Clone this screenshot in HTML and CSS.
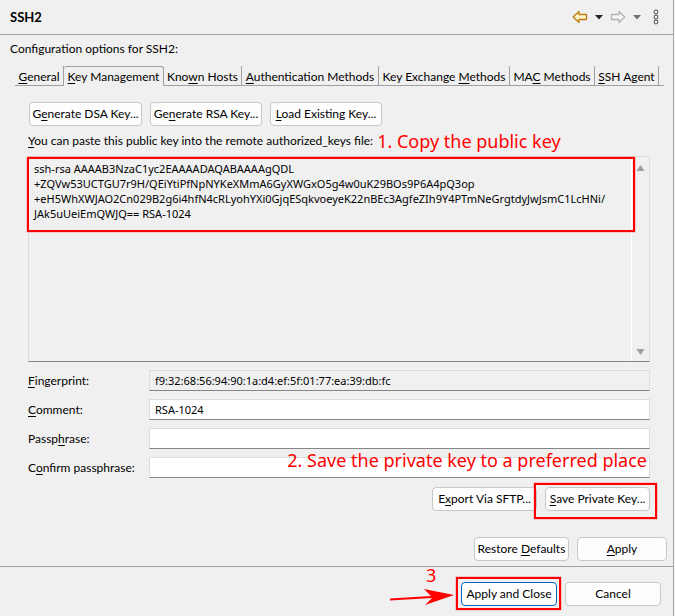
FILE: index.html
```html
<!DOCTYPE html>
<html lang="en">
<head>
<meta charset="utf-8">
<title>SSH2</title>
<link rel="stylesheet" href="styles.css">
</head>
<body>
<main class="window">
  <header class="header">
    <h1>SSH2</h1>
    <nav class="tools" aria-label="History">
      <button class="tool arrow" aria-label="Back"><svg width="16" height="14" viewBox="0 0 16 14"><path d="M1.2 7 7 1.5V4.500H14.500V9.500H7V12.500Z" fill="#fff3c8" stroke="#c07c14" stroke-width="1.300" stroke-linejoin="round"/></svg></button>
      <button class="tool drop" aria-label="Back history"><svg width="8" height="5" viewBox="0 0 8 5"><path d="M0 0H8L4 4.500Z" fill="#222"/></svg></button>
      <button class="tool arrow" aria-label="Forward"><svg width="16" height="14" viewBox="0 0 16 14"><path d="M14.800 7 9 1.500V4.500H1.500V9.500H9V12.500Z" fill="#f5f5f5" stroke="#b2b2b2" stroke-width="1.300" stroke-linejoin="round"/></svg></button>
      <button class="tool drop" aria-label="Forward history"><svg width="8" height="5" viewBox="0 0 8 5"><path d="M0 0H8L4 4.500Z" fill="#707070"/></svg></button>
      <button class="tool menu" aria-label="View menu"><svg width="6" height="16" viewBox="0 0 6 16" fill="#fff" stroke="#666" stroke-width="1.200"><circle cx="3" cy="3" r="1.800"/><circle cx="3" cy="8" r="1.800"/><circle cx="3" cy="13" r="1.800"/></svg></button>
    </nav>
  </header>

  <section class="page">
    <p class="intro">Configuration options for SSH2:</p>
    <div class="tabs" role="tablist">
      <button class="tab" role="tab"><span><u>G</u>eneral</span></button>
      <button class="tab active" role="tab" aria-selected="true"><span><u>K</u>ey Management</span></button>
      <button class="tab" role="tab"><span>Kno<u>w</u>n Hosts</span></button>
      <button class="tab" role="tab"><span><u>A</u>uthentication Methods</span></button>
      <button class="tab" role="tab"><span>Key Exchange <u>M</u>ethods</span></button>
      <button class="tab" role="tab"><span>MA<u>C</u> Methods</span></button>
      <button class="tab" role="tab"><span><u>S</u>SH Agent</span></button>
      <span class="tab-end"></span>
    </div>

    <div class="panel" role="tabpanel">
      <div class="row keys">
        <button class="btn key">G<u>e</u>nerate DSA Key...</button>
        <button class="btn key">Ge<u>n</u>erate RSA Key...</button>
        <button class="btn key"><u>L</u>oad Existing Key...</button>
      </div>
      <div class="caption">
        <label for="pubkey"><u>Y</u>ou can paste this public key into the remote authorized_keys file:</label>
        <span class="note">1. Copy the public key</span>
      </div>
      <div class="keybox">
        <textarea id="pubkey" readonly spellcheck="false">ssh-rsa AAAAB3NzaC1yc2EAAAADAQABAAAAgQDL
+ZQVw53UCTGU7r9H/QEiYtiPfNpNYKeXMmA6GyXWGxO5g4w0uK29BOs9P6A4pQ3op
+eH5WhXWJAO2Cn029B2g6i4hfN4cRLyohYXi0GjqESqkvoeyeK22nBEc3AgfeZIh9Y4PTmNeGrgtdyJwJsmC1LcHNi/
JAk5uUeiEmQWJQ== RSA-1024</textarea>
        <div class="scroll">
          <svg width="9" height="6" viewBox="0 0 9 6"><path d="M.5 6 4 .5H5L8.500 6Z" fill="#a0a0a0"/></svg>
          <svg width="9" height="6" viewBox="0 0 9 6"><path d="M.5 0 4 5.500H5L8.500 0Z" fill="#a0a0a0"/></svg>
        </div>
        <span class="mark mark-key"></span>
      </div>
      <div class="fields">
        <label for="fp"><u>F</u>ingerprint:</label>
        <input id="fp" type="text" readonly value="f9:32:68:56:94:90:1a:d4:ef:5f:01:77:ea:39:db:fc">
        <label for="cm"><u>C</u>omment:</label>
        <input id="cm" type="text" value="RSA-1024">
        <label for="pp">Passp<u>h</u>rase:</label>
        <input id="pp" type="password">
        <label for="cp">C<u>o</u>nfirm passphrase:</label>
        <input id="cp" type="password">
        <span class="note note-save">2. Save the private key to a preferred place</span>
      </div>
      <div class="row end">
        <button class="btn export">E<u>x</u>port Via SFTP...</button>
        <span class="marked"><button class="btn save"><u>S</u>ave Private Key...</button><span class="mark mark-save"></span></span>
      </div>
    </div>
    <div class="row defaults">
      <button class="btn restore">Restore <u>D</u>efaults</button>
      <button class="btn apply"><u>A</u>pply</button>
    </div>
  </section>

  <footer class="footer">
    <span class="marked">
      <button class="btn primary">Apply and Close</button>
      <span class="mark mark-close"></span>
      <span class="note note-three">3</span>
      <svg class="pointer" width="66" height="18" viewBox="0 0 66 18"><path d="M1 10.500 42 8 35 1 65 7 36 17 43 10 1 12.500Z" fill="#f00"/></svg>
    </span>
    <button class="btn cancel">Cancel</button>
  </footer>
</main>
</body>
</html>
```
FILE: styles.css
```css
* { box-sizing: border-box; }

body {
  margin: 0;
  background: #f0f0f0;
  color: #000;
  font: 12px/16px Lato, sans-serif;
}

button, input, textarea { font: inherit; color: inherit; }

input, textarea { font-family: "Noto Sans", sans-serif; font-size: 11px; }

u { text-underline-offset: 2px; text-decoration-thickness: 1px; }

.window {
  min-height: 100vh;
  margin-right: 1px;
  border-right: 1px solid #a8a8a8;
  overflow: hidden;
}

.header {
  display: flex;
  align-items: center;
  justify-content: space-between;
  height: 35px;
  padding: 0 14px 0 10px;
  border-bottom: 1px solid #a0a0a0;
}

h1 { margin: 0; font-size: 13px; line-height: 18px; }

.tools { display: flex; align-items: center; gap: 7px; }

.tool { display: flex; padding: 0; border: 0; background: none; }

.menu { margin-left: 5px; }

.intro { margin: 0; padding: 6px 10px 9px; }

.tabs {
  display: grid;
  grid-template-columns: 49fr 100fr 78fr 137fr 131fr 85fr 64fr 5fr;
  height: 20px;
  margin: 0 9px 0 15px;
}

.tab {
  display: flex;
  align-items: center;
  justify-content: center;
  min-width: 0;
  padding: 2px 0 0;
  border: 0;
  border-right: 1px solid #a0a0a0;
  border-bottom: 1px solid #a0a0a0;
  background: none;
  white-space: nowrap;
}

.tab.active {
  padding: 0;
  border-top: 1px solid #a0a0a0;
  border-bottom: 0;
  border-radius: 3px 3px 0 0;
}

.tab-end { border-bottom: 1px solid #a0a0a0; }

.panel { padding: 16px 23px 0 28px; }

.row { display: flex; gap: 8px; }

.btn {
  height: 24px;
  padding: 0;
  border: 1px solid #c8c8c8;
  border-radius: 4px;
  background: #fdfdfd;
  white-space: nowrap;
}

.keys { padding-left: 1px; }

.key { width: 113px; }

.key + .key { width: 112px; }

.caption {
  display: flex;
  align-items: center;
  gap: 4px;
  height: 30px;
  white-space: nowrap;
}

.note { color: #f00; font: 18px/24px "Noto Sans", sans-serif; white-space: nowrap; }

.keybox {
  position: relative;
  display: flex;
  height: 206px;
  border: 1px solid #dcdcdc;
  border-bottom-color: #868686;
}

textarea {
  flex: 1;
  min-width: 0;
  padding: 4px 0 0 5px;
  border: 0;
  border-right: 1px solid #fff;
  outline: 0;
  resize: none;
  overflow: hidden;
  background: none;
  line-height: 15px;
  white-space: pre;
}

.scroll {
  display: flex;
  flex-direction: column;
  align-items: center;
  justify-content: space-between;
  width: 17px;
  padding: 8px 0 6px;
}

.mark { position: absolute; border: 2px solid #f00; box-shadow: 0 0 1px #f00; pointer-events: none; }

.mark-key { top: 0; left: -2px; right: 14px; height: 75px; }

.fields {
  position: relative;
  display: grid;
  grid-template-columns: 121px 1fr;
  row-gap: 8px;
  align-items: center;
  padding-top: 8px;
}

input {
  width: 100%;
  height: 21px;
  padding: 0 5px;
  border: 1px solid #dcdcdc;
  border-bottom-color: #868686;
  outline: 0;
  background: #fff;
}

input[readonly] { background: #f0f0f0; }

.note-save { position: absolute; right: 3px; bottom: 6px; }

.end { justify-content: flex-end; padding-top: 9px; }

.marked { position: relative; display: flex; }

.export, .save { width: 105px; }

.mark-save { inset: -4px -7px -8px -11px; }

.defaults { justify-content: flex-end; padding: 26px 6px 5px 0; }

.restore { width: 95px; }
.apply { width: 90px; }

.footer {
  display: flex;
  justify-content: flex-end;
  gap: 8px;
  padding: 15px 12px 10px 0;
  border-top: 1px solid #a0a0a0;
}

.primary, .cancel { width: 96px; }

.primary { border-color: #0067c0; }

.mark-close { inset: -5px -4px -4px -5px; }

.note-three { position: absolute; left: -35px; top: -19px; }

.pointer { position: absolute; right: 102px; top: 6px; }
```
